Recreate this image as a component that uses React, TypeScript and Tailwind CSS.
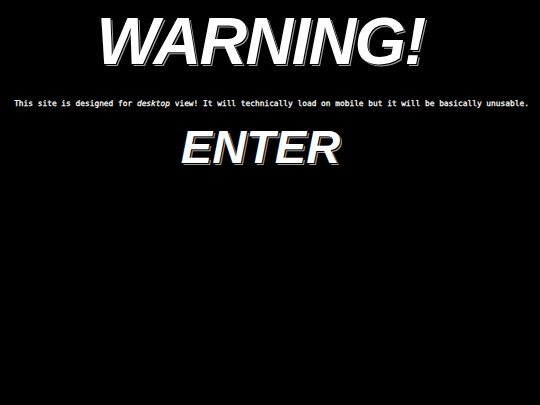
export default function App() {
  return (
    <div className="w-[540px] h-[405px] bg-black flex flex-col items-center overflow-hidden">
      <h1 className="mt-[8px] mr-[19px] text-white font-bold italic text-[66px] leading-none tracking-[-1.6px] font-['Liberation_Sans',Arial,sans-serif] [text-shadow:1px_1px_0_#000,2px_2px_0_#9a9a9a]">
        WARNING!
      </h1>
      <p className="mt-[26px] ml-[3px] text-white text-[7.85px] leading-none whitespace-nowrap font-['DejaVu_Sans_Mono','Liberation_Mono',monospace] [-webkit-text-stroke:0.25px_white]">
        This site is designed for <em>desktop</em> view! It will technically load on mobile but it will be basically unusable.
      </p>
      <div className="mt-[15px] mr-[19px] text-white font-bold italic text-[47px] leading-none font-['Liberation_Sans',Arial,sans-serif] [text-shadow:1px_1px_0_#000,2px_2px_0_#9a9a9a]">
        ENTER
      </div>
    </div>
  );
}
